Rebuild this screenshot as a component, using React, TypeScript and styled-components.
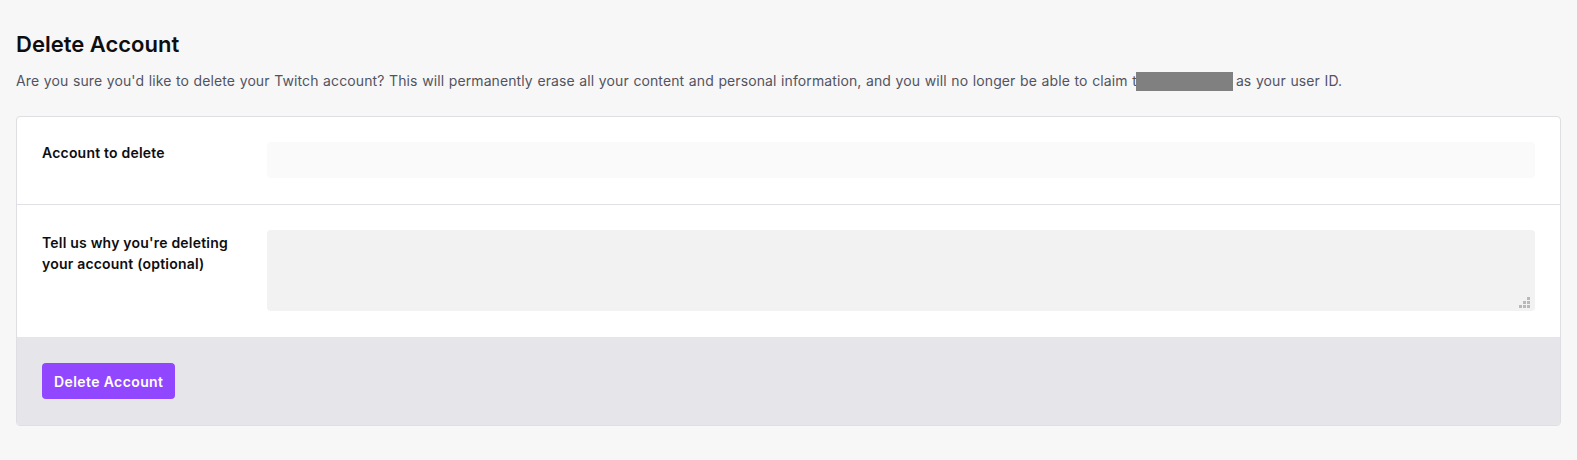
import styled, { createGlobalStyle } from "styled-components";

const GlobalStyle = createGlobalStyle`
  html, body {
    margin: 0;
    padding: 0;
    background: #f7f7f8;
  }
  body {
    font-family: Inter, "Noto Sans", sans-serif;
    color: #0e0e10;
  }
`;

function App() {
  return (
    <>
      <GlobalStyle />
      <Page>
        <Title>Delete Account</Title>
        <Description>
          Are you sure you'd like to delete your Twitch account? This will
          permanently erase all your content and personal information, and you
          will no longer be able to claim t<Redacted />as your user ID.
        </Description>
        <Card>
          <Row>
            <Label>Account to delete</Label>
            <Input readOnly />
          </Row>
          <Row $last>
            <Label $offset={2}>
              Tell us why you're deleting your account (optional)
            </Label>
            <TextAreaWrap>
              <TextArea />
              <Grip viewBox="0 0 11 11" aria-hidden="true">
                <rect x="8" y="0" width="3" height="3" />
                <rect x="4" y="4" width="3" height="3" />
                <rect x="8" y="4" width="3" height="3" />
                <rect x="0" y="8" width="3" height="3" />
                <rect x="4" y="8" width="3" height="3" />
                <rect x="8" y="8" width="3" height="3" />
              </Grip>
            </TextAreaWrap>
          </Row>
          <Footer>
            <Button>Delete Account</Button>
          </Footer>
        </Card>
      </Page>
    </>
  );
}

export default App;

const Page = styled.main`
  padding: 29px 16px 16px;
`;

const Title = styled.h1`
  margin: 0 0 12px;
  font-size: 22px;
  line-height: 30px;
  font-weight: 600;
  color: #0e0e10;
`;

const Description = styled.p`
  margin: 0 0 25px;
  font-size: 14px;
  line-height: 20px;
  letter-spacing: 0.1px;
  word-spacing: 0.55px;
  color: #53535f;
`;

const Redacted = styled.span`
  display: inline-block;
  width: 97px;
  height: 19px;
  margin: 0 3px 0 -1px;
  vertical-align: -5px;
  background: #808080;
`;

const Card = styled.section`
  background: #ffffff;
  border: 1px solid #dedee3;
  border-radius: 4px;
  overflow: hidden;
`;

const Row = styled.div<{ $last?: boolean }>`
  display: grid;
  grid-template-columns: 225px 1fr;
  padding: 25px 25px 26px;
  border-bottom: ${(p) => (p.$last ? "none" : "1px solid #e0e0e5")};
`;

const Label = styled.label<{ $offset?: number }>`
  padding-top: ${(p) => p.$offset ?? 0}px;
  padding-right: 20px;
  font-size: 14px;
  line-height: 21px;
  letter-spacing: 0.2px;
  font-weight: 600;
  color: #0e0e10;
`;

const Input = styled.input`
  box-sizing: border-box;
  height: 36px;
  width: 100%;
  border: none;
  border-radius: 4px;
  background: #fafafa;
  outline: none;
`;

const TextAreaWrap = styled.div`
  position: relative;
`;

const TextArea = styled.textarea`
  box-sizing: border-box;
  display: block;
  height: 81px;
  width: 100%;
  border: none;
  border-radius: 4px;
  background: #f2f2f2;
  outline: none;
  resize: none;
`;

const Grip = styled.svg`
  position: absolute;
  right: 5px;
  bottom: 3px;
  width: 11px;
  height: 11px;
  fill: #b9b9b9;
`;

const Footer = styled.div`
  display: flex;
  padding: 26px 25px;
  background: #e5e5ea;
`;

const Button = styled.button`
  height: 36px;
  padding: 0 12px;
  border: none;
  border-radius: 4px;
  background: #9147ff;
  color: #ffffff;
  font-family: Inter, "Noto Sans", sans-serif;
  font-size: 14px;
  letter-spacing: 0.4px;
  font-weight: 600;
  cursor: pointer;
`;
